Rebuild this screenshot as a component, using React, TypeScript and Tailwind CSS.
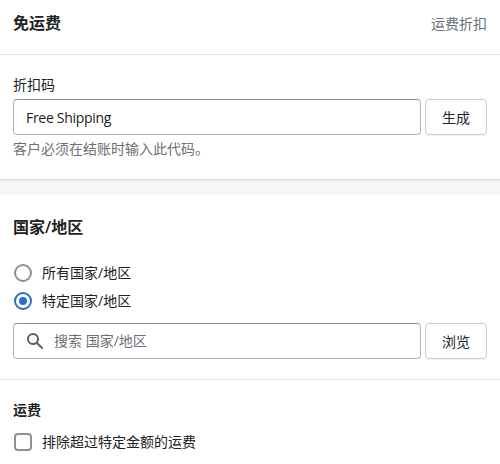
const FONT = "font-['Open_Sans','Noto_Sans_CJK_SC',sans-serif]";

function Radio({ label, checked }: { label: string; checked?: boolean }) {
  return (
    <div className="flex h-[28px] items-center">
      <span
        className={`mr-[10px] ml-[1px] flex h-[18px] w-[18px] items-center justify-center rounded-full border-2 ${
          checked ? "border-[#2c6ecb]" : "border-[#8c9196]"
        }`}
      >
        {checked && <span className="h-[8px] w-[8px] rounded-full bg-[#2c6ecb]" />}
      </span>
      <span className="mb-[2px] text-[14px] text-[#202223]">{label}</span>
    </div>
  );
}

function OutlineButton({ children }: { children: string }) {
  return (
    <button className="h-[36px] w-[62px] rounded-[4px] border border-[#c9cccf] bg-white text-[14px] text-[#202223] shadow-[0_1px_0_rgba(0,0,0,0.05)]">
      {children}
    </button>
  );
}

export default function App() {
  return (
    <div className={`h-[464px] w-[500px] overflow-hidden bg-[#f6f6f7] ${FONT}`}>
      <section className="h-[180px] border-b border-[#dcdcdc] bg-white shadow-[0_1px_2px_rgba(0,0,0,0.08)]">
        <div className="flex h-[55px] items-center justify-between border-b border-[#e1e3e5] px-[13px] pb-[8px]">
          <h2 className="text-[16px] font-semibold text-[#202223]">免运费</h2>
          <span className="text-[14px] text-[#6d7175]">运费折扣</span>
        </div>
        <div className="px-[13px] pt-[20px]">
          <label className="block h-[24px] text-[14px] leading-[20px] text-[#202223]">折扣码</label>
          <div className="flex gap-[4px]">
            <div className="flex h-[36px] w-[408px] items-center rounded-[4px] border border-[#aeb4b9] border-t-[#898f94] px-[12px] text-[14px] tracking-[-0.3px] text-[#202223]">
              Free Shipping
            </div>
            <OutlineButton>生成</OutlineButton>
          </div>
          <p className="mt-[4px] text-[14px] leading-[20px] text-[#6d7175]">客户必须在结账时输入此代码。</p>
        </div>
      </section>

      <section className="mt-[15px] h-[269px] bg-white">
        <div className="px-[13px] pt-[20px]">
          <h2 className="h-[24px] text-[16px] leading-[24px] font-semibold text-[#202223]">国家/地区</h2>
          <div className="mt-[20px]">
            <Radio label="所有国家/地区" />
            <Radio label="特定国家/地区" checked />
          </div>
          <div className="mt-[8px] flex gap-[4px]">
            <div className="flex h-[36px] w-[408px] items-center rounded-[4px] border border-[#aeb4b9] border-t-[#898f94] pl-[11px] text-[14px] text-[#6d7175]">
              <svg viewBox="0 0 20 20" className="mr-[9px] h-[20px] w-[20px] fill-[#5c5f62]">
                <path d="M8 12a4 4 0 1 1 0-8 4 4 0 0 1 0 8zm9.707 4.293-4.82-4.82A5.968 5.968 0 0 0 14 8 6 6 0 0 0 2 8a6 6 0 0 0 6 6c1.296 0 2.49-.417 3.473-1.113l4.82 4.82a.997.997 0 0 0 1.414 0 .999.999 0 0 0 0-1.414z" />
              </svg>
              <span className="mb-[2px]">搜索 国家/地区</span>
            </div>
            <OutlineButton>浏览</OutlineButton>
          </div>
        </div>
        <div className="mt-[20px] border-t border-[#e1e3e5] px-[13px] pt-[20px]">
          <h3 className="h-[20px] text-[14px] leading-[20px] font-semibold text-[#202223]">运费</h3>
          <div className="mt-[12px] flex h-[20px] items-center">
            <span className="mr-[10px] ml-[1px] h-[18px] w-[18px] rounded-[4px] border-2 border-[#8c9196]" />
            <span className="mb-[2px] text-[14px] text-[#202223]">排除超过特定金额的运费</span>
          </div>
        </div>
      </section>
    </div>
  );
}
